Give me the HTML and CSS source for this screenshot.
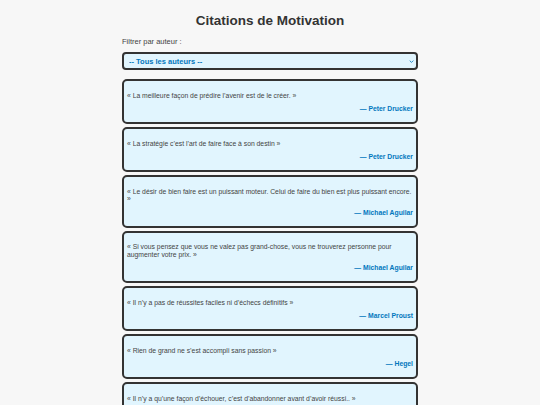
FILE: index.html
```html
<!DOCTYPE html>
<html lang="fr">
<head>
<meta charset="utf-8">
<title>Citations de Motivation</title>
<link rel="stylesheet" href="styles.css">
</head>
<body>
<main class="container">
  <h1 class="title">Citations de Motivation</h1>
  <label class="filter-label" for="author">Filtrer par auteur :</label>
  <div class="select-wrap">
    <select id="author" class="select">
      <option>-- Tous les auteurs --</option>
    </select>
    <svg class="chevron" viewBox="0 0 8 5" width="5" height="3"><path d="M1 1 L4 4 L7 1" fill="none" stroke="#0277bd" stroke-width="1.4"/></svg>
  </div>
  <ul class="quotes">
    <li class="card"><p class="quote">« La meilleure façon de prédire l’avenir est de le créer. »</p><p class="author">— Peter Drucker</p></li>
    <li class="card"><p class="quote">« La stratégie c’est l’art de faire face à son destin »</p><p class="author">— Peter Drucker</p></li>
    <li class="card"><p class="quote">« Le désir de bien faire est un puissant moteur. Celui de faire du bien est plus puissant encore. »</p><p class="author">— Michael Aguilar</p></li>
    <li class="card"><p class="quote">« Si vous pensez que vous ne valez pas grand-chose, vous ne trouverez personne pour augmenter votre prix. »</p><p class="author">— Michael Aguilar</p></li>
    <li class="card"><p class="quote">« Il n’y a pas de réussites faciles ni d’échecs définitifs »</p><p class="author">— Marcel Proust</p></li>
    <li class="card"><p class="quote">« Rien de grand ne s’est accompli sans passion »</p><p class="author">— Hegel</p></li>
    <li class="card"><p class="quote">« Il n’y a qu’une façon d’échouer, c’est d’abandonner avant d’avoir réussi.. »</p><p class="author">— Olivier Lockert</p></li>
  </ul>
</main>
</body>
</html>
```

FILE: styles.css
```css
html, body {
  margin: 0;
  padding: 0;
  background: #f7f7f7;
  font-family: "Liberation Sans", Arial, sans-serif;
  color: #333;
}

.container {
  width: 296px;
  margin: 0 auto;
  padding-top: 12px;
}

.title {
  margin: 0 0 7px;
  font-size: 13.5px;
  line-height: 18px;
  font-weight: bold;
  text-align: center;
  color: #333;
}

.filter-label {
  display: block;
  font-size: 7.5px;
  line-height: 9px;
  color: #444;
  margin-bottom: 6px;
}

.select-wrap {
  position: relative;
  margin-bottom: 9px;
}

.select {
  display: block;
  width: 100%;
  height: 18px;
  box-sizing: border-box;
  appearance: none;
  -webkit-appearance: none;
  background: #e1f5fe;
  border: 2px solid #333;
  border-radius: 4px;
  padding: 0 5px;
  font-family: "Liberation Sans", Arial, sans-serif;
  font-size: 7.5px;
  font-weight: bold;
  color: #0277bd;
}

.chevron {
  position: absolute;
  right: 4px;
  top: 8px;
}

.quotes {
  list-style: none;
  margin: 0;
  padding: 0;
  display: flex;
  flex-direction: column;
  gap: 3px;
}

.card {
  background: #e1f5fe;
  border: 2px solid #333;
  border-radius: 5px;
  padding: 10.5px 3px 9px 3px;
  display: flex;
  flex-direction: column;
  gap: 5px;
}

.quote {
  margin: 0;
  font-size: 6.8px;
  line-height: 7.5px;
  color: #444;
}

.author {
  margin: 0;
  font-size: 6.8px;
  line-height: 9px;
  font-weight: bold;
  text-align: right;
  color: #0277bd;
}
```
